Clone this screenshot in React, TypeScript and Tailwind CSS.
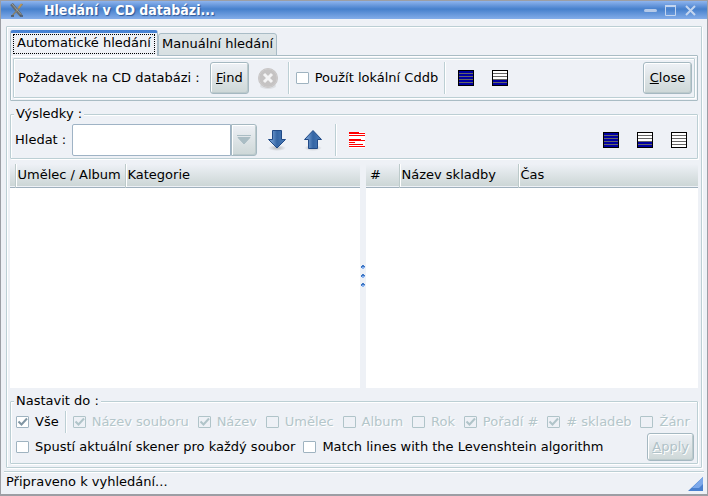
import { useState } from "react";
import type { ReactNode } from "react";
import clsx from "clsx";

const etched =
  "border border-[#bccfd4] shadow-[inset_1px_1px_0_#fff,1px_1px_0_#fff] rounded-[1px]";

const buttonFace =
  "rounded-[3px] border border-[#a5b8c1] bg-linear-to-b from-[#eef1f6] to-[#cdd7d7] shadow-[inset_1px_1px_0_#fff,inset_-1px_-1px_0_#bccacc]";

function Divider({ className }: { className?: string }) {
  return <div className={clsx("w-0.5 shrink-0 self-stretch border-l border-[#bccfd4] bg-white", className)} />;
}

/** Small ruled page; `selected` gives the rows that are drawn as selected. */
function RowsIcon({ selected }: { selected: "all" | "bottom" | "none" }) {
  const top = selected === "all" ? "#0000a0" : "#fff";
  const bottom = selected === "none" ? "#fff" : "#0000a0";
  return (
    <svg aria-hidden className="size-4" shapeRendering="crispEdges" viewBox="0 0 16 16">
      <rect fill="#000" height="16" width="16" />
      <rect fill={top} height="9" width="14" x="1" y="1" />
      <rect fill={bottom} height="6" width="14" x="1" y="9" />
      <path d="M1 3.5h14M1 6.5h14M1 9.5h14M1 12.5h14" stroke="#666" />
    </svg>
  );
}

function ToolButton({ label, children }: { label: string; children: ReactNode }) {
  return (
    <button aria-label={label} className="flex h-8 w-8 shrink-0 items-center justify-center" type="button">
      {children}
    </button>
  );
}

function ArrowIcon({ up }: { up?: boolean }) {
  return (
    <svg aria-hidden className="h-[22px] w-5" viewBox="0 0 20 22">
      <defs>
        <linearGradient id={up ? "arrow-up" : "arrow-down"} x1="0" x2="1">
          <stop offset="0.2" stopColor="#6b96cb" />
          <stop offset="0.5" stopColor="#3465a4" />
          <stop offset="1" stopColor="#4c7db9" />
        </linearGradient>
        <radialGradient id={up ? "shade-up" : "shade-down"}>
          <stop offset="0" stopColor="#8c8f93" stopOpacity="0.6" />
          <stop offset="1" stopColor="#8c8f93" stopOpacity="0" />
        </radialGradient>
      </defs>
      <ellipse cx="10" cy="19" fill={`url(#${up ? "shade-up" : "shade-down"})`} rx="9" ry="3" />
      <path
        d={up ? "M10 1.5 18.5 10.5H14.5V19.5H5.5V10.5H1.5Z" : "M5.5 1.5h9v9h4L10 19 1.5 10.5h4Z"}
        fill={`url(#${up ? "arrow-up" : "arrow-down"})`}
        stroke="#204a87"
      />
    </svg>
  );
}

function Check({
  label,
  defaultChecked,
  disabled,
}: {
  label: string;
  defaultChecked?: boolean;
  disabled?: boolean;
}) {
  return (
    <label
      className={clsx(
        "flex shrink-0 items-center gap-[6px] whitespace-nowrap",
        disabled && "text-[#b4c6ca] [text-shadow:1px_1px_0_#fff]",
      )}
    >
      <span className="grid">
        <input
          className={clsx(
            "peer col-start-1 row-start-1 h-3 w-[13px] appearance-none rounded-[1px] border",
            disabled ? "border-[#b0c4c9]" : "border-[#9fb3c0] bg-white",
          )}
          defaultChecked={defaultChecked}
          disabled={disabled}
          type="checkbox"
        />
        <svg
          aria-hidden
          className="pointer-events-none invisible col-start-1 row-start-1 h-3 w-[13px] peer-checked:visible"
          viewBox="0 0 13 12"
        >
          <path
            d="M2.5 5.5 5.5 8.5 11 2.5"
            fill="none"
            stroke={disabled ? "#b0c4c9" : "#8095a3"}
            strokeWidth="2"
          />
        </svg>
      </span>
      {label}
    </label>
  );
}

function ListView({ columns, label }: { columns: { title: string; width?: string }[]; label: string }) {
  return (
    <div className="min-w-0 bg-white">
      <table aria-label={label} className="w-full table-fixed border-collapse">
        <thead>
          <tr className="h-[23px] border-b border-[#9fb0bd] bg-linear-to-b from-[#eef1f6] to-[#ccd6d6]">
            {columns.map((column, i) => (
              <th
                className={clsx(
                  "p-0 text-left font-normal whitespace-nowrap",
                  column.width,
                  i > 0 && "border-l border-[#bccaca] shadow-[inset_1px_0_0_#fff]",
                )}
                key={i}
              >
                <span className={i === 0 ? "pl-1" : "pl-0.5"}>{column.title}</span>
              </th>
            ))}
          </tr>
        </thead>
      </table>
    </div>
  );
}

function TitleBar() {
  return (
    <header className="flex h-[18px] items-center bg-linear-to-b from-[#8eb4ee] via-[#4680cc] via-45% to-[#83ade9] pr-2.5 pl-2">
      <svg aria-hidden className="size-4" viewBox="0 0 16 16">
        <path d="M2.5 2 12 13.5" stroke="#656a6d" strokeWidth="3.5" />
        <path d="M13.5 2 3 14" stroke="#85816f" strokeWidth="1.5" />
        <path d="M3 2 12 12.5" stroke="#9aa09f" />
        <path d="M12.5 2 9.5 6" stroke="#c19750" strokeWidth="1.5" />
        <path d="M2 14h3M11 14h3" stroke="#4c535b" strokeWidth="1.5" />
      </svg>
      <h1 className="flex-1 pl-[19px] font-['DejaVu_Sans_Condensed','DejaVu_Sans',sans-serif] text-[14px] font-bold text-white [text-shadow:1px_1px_1px_#2a5597]">
        Hledání v CD databázi...
      </h1>
      <div className="flex items-center gap-[7px]">
        <button aria-label="Minimize" type="button">
          <svg aria-hidden className="h-[13px] w-[13px]" viewBox="0 0 13 13">
            <path d="M1.5 6.5h10" stroke="#b4c9e8" strokeLinecap="round" strokeWidth="3" />
          </svg>
        </button>
        <button aria-label="Maximize" type="button">
          <svg aria-hidden className="h-[13px] w-[13px]" viewBox="0 0 13 13">
            <path d="M1.5 2v9.5h10V2" fill="none" stroke="#c3d5ef" />
            <path d="M1 2h11" stroke="#c3d5ef" strokeWidth="2" />
          </svg>
        </button>
        <button aria-label="Close window" type="button">
          <svg aria-hidden className="h-[13px] w-[13px]" viewBox="0 0 13 13">
            <path d="m2 2 9 9M11 2l-9 9" stroke="#c3d5ef" strokeWidth="2" />
          </svg>
        </button>
      </div>
    </header>
  );
}

function Tabs({ active, onSelect }: { active: number; onSelect: (i: number) => void }) {
  return (
    <div className="relative -mb-px flex items-end" role="tablist">
      {["Automatické hledání", "Manuální hledání"].map((title, i) => (
        <button
          aria-selected={active === i}
          className={clsx(
            "rounded-t-[3px] border-x whitespace-nowrap",
            active === i
              ? "h-[26px] min-w-[148px] border-t-[3px] border-x-[#a9bcc6] border-t-[#4782d3] bg-[#eef1f6] px-0.5 pb-[2px]"
              : "h-[23px] min-w-[117px] border-y border-[#a9bcc6] bg-linear-to-b from-[#dfe6e9] to-[#d8e0e2] px-[3px]",
          )}
          key={title}
          onClick={() => onSelect(i)}
          role="tab"
          type="button"
        >
          <span className={clsx("block", active === i ? "border border-dotted border-black px-px pb-0.5 leading-4" : "pb-0.5 leading-[18px]")}>
            {title}
          </span>
        </button>
      ))}
    </div>
  );
}

export default function App() {
  const [tab, setTab] = useState(0);

  return (
    <div className="flex min-h-screen flex-col border border-b-2 border-[#9c9ea4] bg-[#eef1f6] font-['DejaVu_Sans',sans-serif] text-[13px] leading-4 text-black">
      <TitleBar />

      <main className={clsx("mx-[5px] mt-[7px] flex flex-1 flex-col p-[3px] pb-[3px]", etched)}>
        <Tabs active={tab} onSelect={setTab} />
        <div className="rounded-[1px] border border-[#a9bcc4] p-0.5 shadow-[inset_1px_1px_0_#fff]" role="tabpanel">
          <div className={clsx("flex items-center py-[3px] pr-0.5 pl-1", etched)}>
            <span className="min-w-[188px] whitespace-nowrap">Požadavek na CD databázi :</span>
            <button className={clsx("ml-1 h-8 min-w-[38px] px-[5px]", buttonFace)} type="button">
              <u>F</u>ind
            </button>
            <button aria-label="Stop" className="ml-[7px] shrink-0" disabled type="button">
              <svg aria-hidden className="size-6" viewBox="0 0 24 24">
                <ellipse cx="12" cy="20" fill="#dcdfe3" rx="8" ry="3" />
                <circle cx="12" cy="12" fill="#c5c3c3" r="10" />
                <circle cx="12" cy="12" fill="none" r="9" stroke="#cfcdcd" />
                <path d="m8 8 8 8M16 8l-8 8" stroke="#f4f4f5" strokeWidth="3" />
              </svg>
            </button>
            <Divider className="mr-1.5 ml-2" />
            <Check label="Použít lokální Cddb" />
            <Divider className="mr-1 ml-1.5" />
            <div className="flex gap-0.5">
              <ToolButton label="Select all rows">
                <RowsIcon selected="all" />
              </ToolButton>
              <ToolButton label="Invert selection">
                <RowsIcon selected="bottom" />
              </ToolButton>
            </div>
            <button className={clsx("ml-auto h-8 min-w-[49px] px-[5px]", buttonFace)} type="button">
              <u>C</u>lose
            </button>
          </div>
        </div>

        <fieldset className={clsx("mt-[5px] min-w-0 pt-0.5 pb-0.5", etched)}>
          <legend className="ml-[3px] bg-[#eef1f6] px-0.5">Výsledky :</legend>
          <div className="flex items-center pr-0.5 pl-1">
            <label className="whitespace-nowrap" htmlFor="search">
              Hledat :
            </label>
            <div className="ml-1.5 flex h-8">
              <input
                className="w-[159px] rounded-l-[2px] border border-[#9fb3c5] bg-white px-1 outline-none"
                id="search"
                type="text"
              />
              <button aria-label="Search history" className={clsx("flex w-[26px] items-center justify-center rounded-l-none", buttonFace)} type="button">
                <svg aria-hidden className="h-2.5 w-[14px]" viewBox="0 0 14 10">
                  <path d="M0 .5h14M1 2.5h12L7 9Z" fill="#aabdc4" stroke="#aabdc4" />
                </svg>
              </button>
            </div>
            <div className="ml-1 flex gap-1">
              <ToolButton label="Find next">
                <ArrowIcon />
              </ToolButton>
              <ToolButton label="Find previous">
                <ArrowIcon up />
              </ToolButton>
            </div>
            <Divider className="mr-1 ml-1.5" />
            <ToolButton label="Show red lines">
              <svg aria-hidden className="size-4" shapeRendering="crispEdges" viewBox="0 0 16 16">
                <rect fill="#fff" height="16" width="16" />
                <path d="M0 .5h10M0 1.5h16M0 3.5h16M0 7.5h12M0 8.5h16M0 10.5h6M0 12.5h14M0 14.5h16" stroke="#f00" />
              </svg>
            </ToolButton>
            <div className="ml-auto flex gap-0.5">
              <ToolButton label="Select all">
                <RowsIcon selected="all" />
              </ToolButton>
              <ToolButton label="Invert">
                <RowsIcon selected="bottom" />
              </ToolButton>
              <ToolButton label="Unselect all">
                <RowsIcon selected="none" />
              </ToolButton>
            </div>
          </div>
        </fieldset>

        <div className="mt-[5px] grid flex-1 grid-cols-[350fr_6px_332fr]">
          <ListView
            columns={[{ title: "", width: "w-[5px]" }, { title: "Umělec / Album", width: "w-[110px]" }, { title: "Kategorie" }]}
            label="Alba"
          />
          <div className="flex flex-col items-center justify-center gap-[5px]" role="separator">
            {[0, 1, 2].map((i) => (
              <svg aria-hidden className="h-1 w-1" key={i} shapeRendering="crispEdges" viewBox="0 0 4 4">
                <path d="M1 0h2v1h1v2H0V1h1Z" fill="#3f78c6" />
                <path d="M1 2h3v1H3v1H1Z" fill="#8db4ef" />
              </svg>
            ))}
          </div>
          <ListView
            columns={[
              { title: "#", width: "w-[33px]" },
              { title: "Název skladby", width: "w-[119px]" },
              { title: "Čas" },
            ]}
            label="Skladby"
          />
        </div>

        <fieldset className={clsx("mt-[5px] min-w-0 pt-0.5 pb-0.5", etched)}>
          <legend className="ml-[3px] bg-[#eef1f6] px-0.5">Nastavit do :</legend>
          <div className="flex h-[22px] items-center justify-between pr-[7px] pl-[5px]">
            <div className="flex gap-1.5 self-stretch">
              <Check defaultChecked label="Vše" />
              <Divider />
              <Check defaultChecked disabled label="Název souboru" />
            </div>
            <Check defaultChecked disabled label="Název" />
            <Check disabled label="Umělec" />
            <Check disabled label="Album" />
            <Check disabled label="Rok" />
            <Check defaultChecked disabled label="Pořadí #" />
            <Check defaultChecked disabled label="# skladeb" />
            <Check disabled label="Žánr" />
          </div>
          <div className="flex items-center gap-2 pr-[3px] pl-[5px]">
            <Check label="Spustí aktuální skener pro každý soubor" />
            <Check label="Match lines with the Levenshtein algorithm" />
            <button
              className={clsx("ml-auto h-7 min-w-[46px] px-1 text-[#b0c2c8] [text-shadow:1px_1px_0_#fff]", buttonFace)}
              disabled
              type="button"
            >
              <u>A</u>pply
            </button>
          </div>
        </fieldset>
      </main>

      <footer className="mx-[3px] mt-[3px] flex h-[23px] items-start border-t border-[#bccfd4] pl-0.5 shadow-[inset_0_1px_0_#fff]">
        <p className="mt-0.5" role="status">
          Připraveno k vyhledání...
        </p>
        <svg aria-hidden className="mt-1 ml-auto size-4" viewBox="0 0 16 16">
          <path d="M15 1v14H0Z" fill="#4a80cf" />
          <path d="M15 1v7l-4 4H4Z" fill="#7ca8ea" />
        </svg>
      </footer>
    </div>
  );
}
